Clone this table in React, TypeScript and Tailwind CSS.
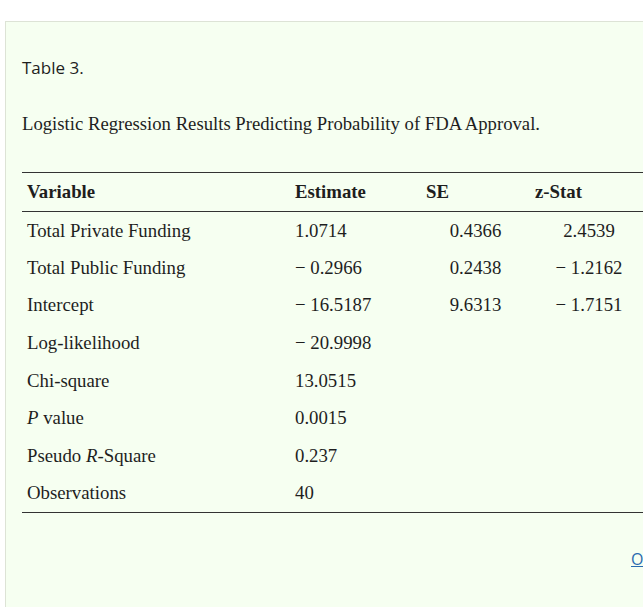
import React from "react";

const serif = { fontFamily: '"Liberation Serif", "DejaVu Serif", serif' };

type Row = { v: React.ReactNode; e: string; se?: string; z?: string };

const rows: Row[] = [
  { v: "Total Private Funding", e: "1.0714", se: "0.4366", z: "2.4539" },
  { v: "Total Public Funding", e: "− 0.2966", se: "0.2438", z: "− 1.2162" },
  { v: "Intercept", e: "− 16.5187", se: "9.6313", z: "− 1.7151" },
  { v: "Log-likelihood", e: "− 20.9998" },
  { v: "Chi-square", e: "13.0515" },
  { v: <><i>P</i> value</>, e: "0.0015" },
  { v: <>Pseudo <i>R</i>-Square</>, e: "0.237" },
  { v: "Observations", e: "40" },
];

export default function App() {
  return (
    <div className="w-[643px] h-[607px] overflow-hidden bg-white pt-[21px] pl-[5px]">
      <div className="w-[680px] h-[620px] border border-[#dde3d6] bg-[#f6fff1] pl-[16px] pt-[34px] text-[#1e1e1e]">
        <p className="text-[17px] leading-[24px]" style={{ fontFamily: '"Open Sans", sans-serif' }}>
          Table 3.
        </p>
        <p className="mt-[31px] text-[18.7px] leading-[26px]" style={serif}>
          Logistic Regression Results Predicting Probability of FDA Approval.
        </p>
        <table
          className="mt-[35px] table-fixed border-collapse text-[18.8px] leading-[24px] w-[626px]"
          style={serif}
        >
          <colgroup>
            <col className="w-[268px]" />
            <col className="w-[131px]" />
            <col className="w-[109px]" />
            <col className="w-[118px]" />
          </colgroup>
          <thead>
            <tr className="h-[39px] border-t border-b border-[#333]">
              <th className="text-left font-bold px-[5px]">Variable</th>
              <th className="text-left font-bold px-[5px]">Estimate</th>
              <th className="text-left font-bold px-[5px]">SE</th>
              <th className="text-left font-bold px-[5px]">z-Stat</th>
            </tr>
          </thead>
          <tbody className="border-b border-[#333]">
            {rows.map((r, i) => (
              <tr key={i} className="h-[37.6px]">
                <td className="px-[5px] whitespace-nowrap">{r.v}</td>
                <td className="px-[5px] whitespace-nowrap">{r.e}</td>
                <td className="px-[5px] text-center whitespace-nowrap">{r.se ?? ""}</td>
                <td className="px-[5px] text-center whitespace-nowrap">{r.z ?? ""}</td>
              </tr>
            ))}
          </tbody>
        </table>
        <div className="mt-[34px] ml-[609px] whitespace-nowrap text-[16px] leading-[24px]" style={{ fontFamily: '"Open Sans", sans-serif' }}>
          <a href="#" className="text-[#2a6bb0] underline">Open in a new tab</a>
        </div>
      </div>
    </div>
  );
}
